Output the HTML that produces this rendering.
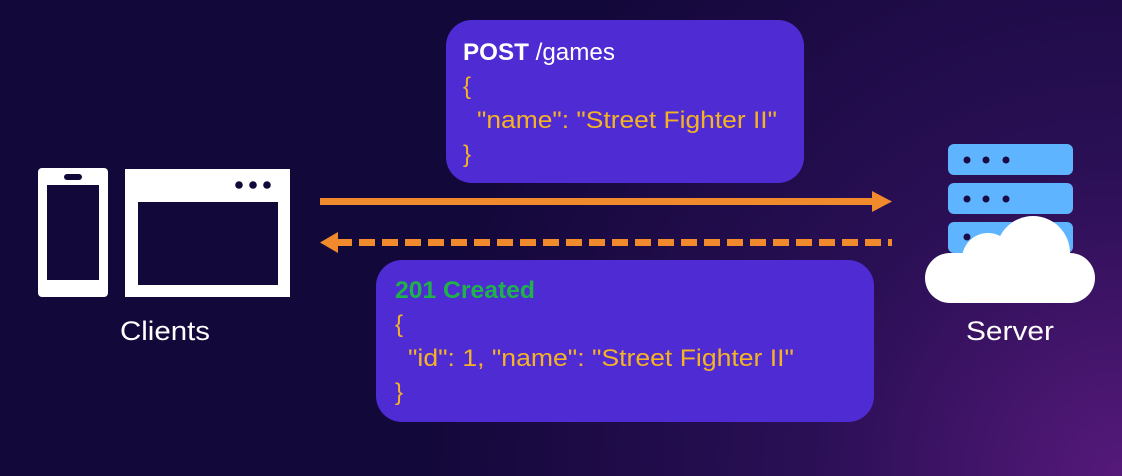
<!DOCTYPE html>
<html><head><style>
html,body{margin:0;padding:0;}
body{width:1122px;height:476px;overflow:hidden;background:#13083a;}
svg{display:block;}
text{font-family:"Liberation Sans",sans-serif;}
</style></head><body>
<svg width="1122" height="476" viewBox="0 0 1122 476">
<defs>
<radialGradient id="bg" cx="1122" cy="476" r="700" gradientUnits="userSpaceOnUse">
<stop offset="0" stop-color="#55197a"/>
<stop offset="0.45" stop-color="#2a0f55"/>
<stop offset="1" stop-color="#13083a"/>
</radialGradient>
</defs>
<rect width="1122" height="476" fill="url(#bg)"/>
<!-- phone -->
<rect x="38" y="168" width="70" height="129" rx="4" fill="#fff"/>
<rect x="47" y="185" width="52" height="95" fill="#13083a"/>
<rect x="64" y="174" width="18" height="6" rx="3" fill="#13083a"/>
<!-- browser -->
<rect x="125" y="169" width="165" height="128" fill="#fff"/>
<rect x="138" y="202" width="140" height="83" fill="#13083a"/>
<circle cx="239" cy="185" r="3.8" fill="#13083a"/>
<circle cx="253" cy="185" r="3.8" fill="#13083a"/>
<circle cx="267" cy="185" r="3.8" fill="#13083a"/>
<text x="165" y="340" fill="#fff" font-size="27" text-anchor="middle" textLength="90" lengthAdjust="spacingAndGlyphs">Clients</text>
<!-- server -->
<g fill="#5fb4ff">
<rect x="948" y="144" width="125" height="31" rx="6"/>
<rect x="948" y="183" width="125" height="31" rx="6"/>
<rect x="948" y="222" width="125" height="31" rx="6"/>
</g>
<g fill="#1a0a45">
<circle cx="967" cy="160" r="3.5"/><circle cx="986" cy="160" r="3.5"/><circle cx="1006" cy="160" r="3.5"/>
<circle cx="967" cy="199" r="3.5"/><circle cx="986" cy="199" r="3.5"/><circle cx="1006" cy="199" r="3.5"/>
<circle cx="967" cy="237" r="3.5"/>
</g>
<g fill="#fff">
<circle cx="1033" cy="253" r="37"/>
<circle cx="988" cy="259" r="26"/>
<rect x="925" y="253" width="170" height="50" rx="25"/>
</g>
<text x="1010" y="340" fill="#fff" font-size="27" text-anchor="middle" textLength="88" lengthAdjust="spacingAndGlyphs">Server</text>
<!-- arrows -->
<rect x="320" y="198" width="556" height="7" fill="#f08a2c"/>
<polygon points="872,191 892,201.5 872,212" fill="#f08a2c"/>
<polygon points="320,242.5 338,232 338,253" fill="#f08a2c"/>
<line x1="336" y1="242.5" x2="892" y2="242.5" stroke="#f08a2c" stroke-width="7" stroke-dasharray="16 7"/>
<!-- box 1 -->
<rect x="446" y="20" width="358" height="163" rx="26" fill="#4f2bd4"/>
<text x="463" y="60" font-size="24" fill="#fff" textLength="152" lengthAdjust="spacingAndGlyphs"><tspan font-weight="bold">POST</tspan> /games</text>
<text x="463" y="94" font-size="24" fill="#f5b324">{</text>
<text x="477" y="128" font-size="24" fill="#f5b324" textLength="300" lengthAdjust="spacingAndGlyphs">"name": "Street Fighter II"</text>
<text x="463" y="162" font-size="24" fill="#f5b324">}</text>
<!-- box 2 -->
<rect x="376" y="260" width="498" height="162" rx="26" fill="#4f2bd4"/>
<text x="395" y="298" font-size="24" font-weight="bold" fill="#1fb24a" textLength="140" lengthAdjust="spacingAndGlyphs">201 Created</text>
<text x="395" y="332" font-size="24" fill="#f5b324">{</text>
<text x="408" y="366" font-size="24" fill="#f5b324" textLength="386" lengthAdjust="spacingAndGlyphs">"id": 1, "name": "Street Fighter II"</text>
<text x="395" y="400" font-size="24" fill="#f5b324">}</text>
</svg>
</body></html>
